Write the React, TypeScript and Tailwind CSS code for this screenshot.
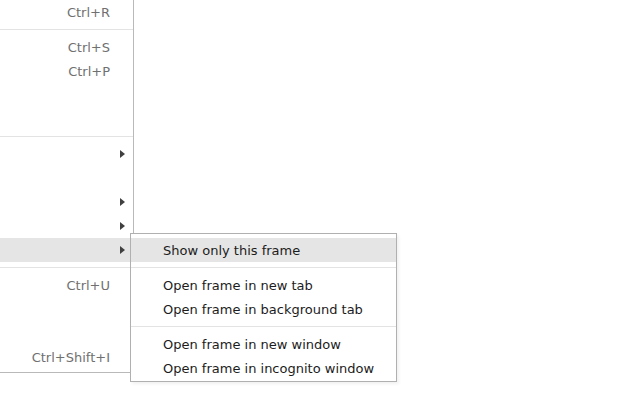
const FONT = "font-['DejaVu_Sans',sans-serif]";

type Row =
  | { kind: "item"; shortcut?: string; sub?: boolean; active?: boolean }
  | { kind: "sep" };

const LEFT_ROWS: Row[] = [
  { kind: "item", shortcut: "Ctrl+R" },
  { kind: "sep" },
  { kind: "item", shortcut: "Ctrl+S" },
  { kind: "item", shortcut: "Ctrl+P" },
  { kind: "item" },
  { kind: "item" },
  { kind: "sep" },
  { kind: "item", sub: true },
  { kind: "item" },
  { kind: "item", sub: true },
  { kind: "item", sub: true },
  { kind: "item", sub: true, active: true },
  { kind: "sep" },
  { kind: "item", shortcut: "Ctrl+U" },
  { kind: "item" },
  { kind: "item" },
  { kind: "item", shortcut: "Ctrl+Shift+I" },
];

const FRAME_ITEMS: (string | null)[] = [
  "Show only this frame",
  null,
  "Open frame in new tab",
  "Open frame in background tab",
  null,
  "Open frame in new window",
  "Open frame in incognito window",
];

function Separator() {
  return (
    <div className="h-[11px] flex items-center">
      <div className="h-px w-full bg-[#e3e3e3]" />
    </div>
  );
}

function SubArrow() {
  return (
    <svg width="5" height="8" viewBox="0 0 5 8" className="fill-[#404040]">
      <path d="M0 0 L5 4 L0 8 Z" />
    </svg>
  );
}

export default function App() {
  return (
    <div className={`relative w-[640px] h-[400px] bg-white overflow-hidden text-[13px] ${FONT}`}>
      {/* parent context menu, its top and left are off-screen */}
      <div className="w-[134px] border-r border-b border-[#b9b9b9] bg-white pb-[3px]">
        {LEFT_ROWS.map((r, i) =>
          r.kind === "sep" ? (
            <Separator key={i} />
          ) : (
            <div
              key={i}
              className={`h-6 flex items-center justify-end pr-[8px] ${r.active ? "bg-[#e5e5e5]" : ""}`}
            >
              {r.shortcut && <span className="text-[#707070] mr-[15px] pt-[1px]">{r.shortcut}</span>}
              {r.sub && <SubArrow />}
            </div>
          ),
        )}
      </div>

      {/* frame submenu */}
      <div className="absolute left-[130px] top-[233px] w-[267px] border border-[#b0b0b0] bg-white pt-[4px] pb-[1px] shadow-[2px_2px_3px_rgba(0,0,0,0.06)]">
        {FRAME_ITEMS.map((label, i) =>
          label === null ? (
            <Separator key={i} />
          ) : (
            <div
              key={i}
              className={`h-6 flex items-center pl-[32px] pt-[1px] text-[#1c1c1c] ${i === 0 ? "bg-[#e5e5e5]" : ""}`}
            >
              {label}
            </div>
          ),
        )}
      </div>
    </div>
  );
}
